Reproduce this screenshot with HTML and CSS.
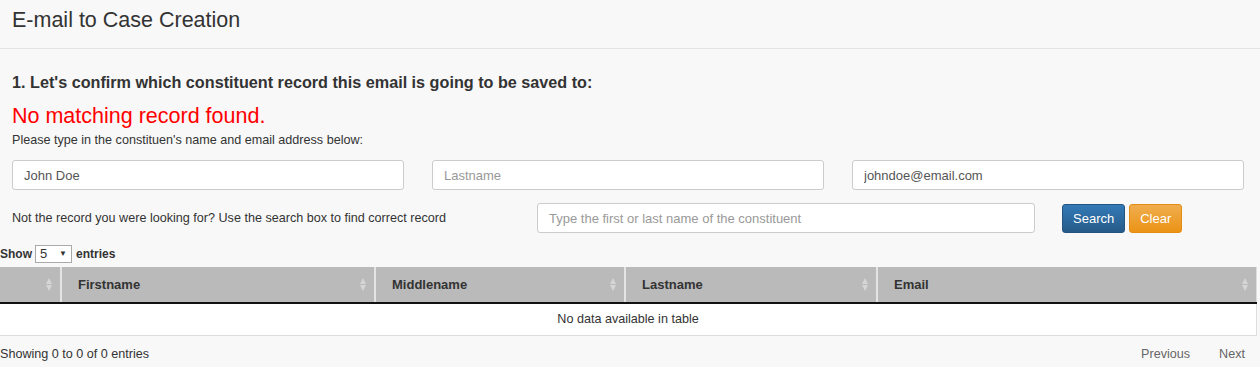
FILE: index.html
```html
<!DOCTYPE html>
<html lang="en">
<head>
  <meta charset="UTF-8" />
  <title>E-mail to Case Creation</title>
  <link rel="stylesheet" href="styles.css">
</head>
<body>
  <!-- Page title -->
  <div class="page-header">
    <h1>E-mail to Case Creation</h1>
  </div>

  <div class="content">
    <h2 class="step-title">1. Let's confirm which constituent record this email is going to be saved to:</h2>
    <div class="no-match">No matching record found.</div>
    <p class="hint">Please type in the constituen's name and email address below:</p>

    <div class="name-row">
      <input type="text" class="form-control" value="John Doe">
      <input type="text" class="form-control" placeholder="Lastname">
      <input type="text" class="form-control" value="johndoe@email.com">
    </div>

    <div class="search-row">
      <span class="search-label">Not the record you were looking for? Use the search box to find correct record</span>
      <input type="text" class="form-control search-input" placeholder="Type the first or last name of the constituent">
      <div class="search-buttons">
        <button class="btn btn-primary">Search</button>
        <button class="btn btn-warning">Clear</button>
      </div>
    </div>
  </div>

  <!-- Results table -->
  <div class="table-wrapper">
    <div class="length-row">
      Show
      <span class="fake-select">5 <span class="caret">&#9660;</span></span>
      entries
    </div>

    <table class="data-table">
      <thead>
        <tr>
          <th class="col-check"><span class="sort"></span></th>
          <th class="col-first">Firstname<span class="sort"></span></th>
          <th class="col-middle">Middlename<span class="sort"></span></th>
          <th class="col-last">Lastname<span class="sort"></span></th>
          <th class="col-email">Email<span class="sort"></span></th>
        </tr>
      </thead>
      <tbody>
        <tr>
          <td colspan="5" class="empty">No data available in table</td>
        </tr>
      </tbody>
    </table>

    <div class="table-footer">
      <span>Showing 0 to 0 of 0 entries</span>
      <div class="pager">
        <a href="#">Previous</a>
        <a href="#">Next</a>
      </div>
    </div>
  </div>
</body>
</html>
```

FILE: styles.css
```css
* { margin: 0; padding: 0; box-sizing: border-box; }
body {
  font-family: "Liberation Sans", Arial, sans-serif;
  font-size: 13px;
  color: #333;
  background-color: #f8f8f8;
  width: 1260px;
}
/* Title bar */
.page-header {
  height: 49px;
  border-bottom: 1px solid #e3e3e3;
  padding: 8px 12px 0;
}
.page-header h1 {
  font-size: 21.5px;
  font-weight: normal;
  line-height: 24px;
  color: #333;
}
.content {
  padding: 23px 16px 0 12px;
}
.step-title {
  font-size: 16.2px;
  font-weight: bold;
  line-height: 20px;
  color: #333;
}
.no-match {
  color: #ff0000;
  font-size: 21.5px;
  line-height: 26px;
  margin-top: 11px;
}
.hint {
  font-size: 12.6px;
  line-height: 16px;
  margin-top: 3px;
}
.form-control {
  display: block;
  height: 30px;
  padding: 4px 11px;
  font-family: inherit;
  font-size: 13px;
  color: #555;
  background-color: #fff;
  border: 1px solid #ccc;
  border-radius: 3px;
  outline: none;
}
.form-control::placeholder {
  color: #999;
}
.name-row {
  display: grid;
  grid-template-columns: repeat(3, 1fr);
  column-gap: 28px;
  margin-top: 12px;
}
.search-row {
  display: flex;
  align-items: center;
  margin-top: 13px;
  height: 30px;
}
.search-label {
  width: 525px;
  font-size: 12.6px;
}
.search-input {
  width: 498px;
}
.search-buttons {
  display: flex;
  gap: 4px;
  margin-left: 27px;
}
.btn {
  height: 29px;
  padding: 0 10px;
  font-family: inherit;
  font-size: 13px;
  color: #fff;
  border-radius: 3px;
  cursor: pointer;
}
.btn-primary {
  background: linear-gradient(#337ab7, #265a88);
  border: 1px solid #245580;
}
.btn-warning {
  background: linear-gradient(#f0ad4e, #eb9316);
  border: 1px solid #e38d13;
}
/* Table */
.table-wrapper {
  width: 1257px;
  margin-top: 12px;
}
.length-row {
  font-size: 12px;
  font-weight: bold;
  line-height: 18px;
  display: flex;
  align-items: center;
  gap: 3px;
}
.fake-select {
  display: inline-flex;
  justify-content: space-between;
  align-items: center;
  width: 37px;
  height: 18px;
  padding: 0 4px;
  background: #fff;
  border: 1px solid #a9a9a9;
  font-weight: normal;
  font-size: 13px;
  margin-right: 1px;
}
.caret {
  font-size: 8px;
}
.data-table {
  width: 100%;
  border-collapse: collapse;
  margin-top: 4px;
  background: #fff;
}
.data-table th {
  position: relative;
  height: 36px;
  background-color: #bababa;
  border-bottom: 2px solid #111;
  border-left: 2px solid #e4e4e4;
  text-align: left;
  font-size: 13px;
  font-weight: bold;
  color: #333;
  padding: 0 16px;
}
.data-table th:first-child {
  border-left: none;
}
.data-table th.col-email {
  border-right: 1px solid #ddd;
}
.col-check { width: 61px; }
.col-first { width: 314px; }
.col-middle { width: 250px; }
.col-last { width: 252px; }
/* sort arrows */
.sort {
  position: absolute;
  right: 7px;
  top: 11px;
  width: 7px;
  height: 13px;
}
.sort::before, .sort::after {
  content: "";
  position: absolute;
  left: 0;
  border-left: 3.5px solid transparent;
  border-right: 3.5px solid transparent;
}
.sort::before {
  top: 0;
  border-bottom: 6px solid #d6d6d6;
}
.sort::after {
  bottom: 0;
  border-top: 6px solid #d6d6d6;
}
.data-table td.empty {
  height: 32px;
  text-align: center;
  font-size: 12.6px;
  border-bottom: 1px solid #ddd;
  border-right: 1px solid #ddd;
}
.table-footer {
  display: flex;
  justify-content: space-between;
  align-items: center;
  font-size: 12.6px;
  line-height: 16px;
  margin-top: 10px;
}
.pager {
  display: flex;
  gap: 29px;
  padding-right: 12px;
}
.pager a {
  color: #666;
  text-decoration: none;
}
```
